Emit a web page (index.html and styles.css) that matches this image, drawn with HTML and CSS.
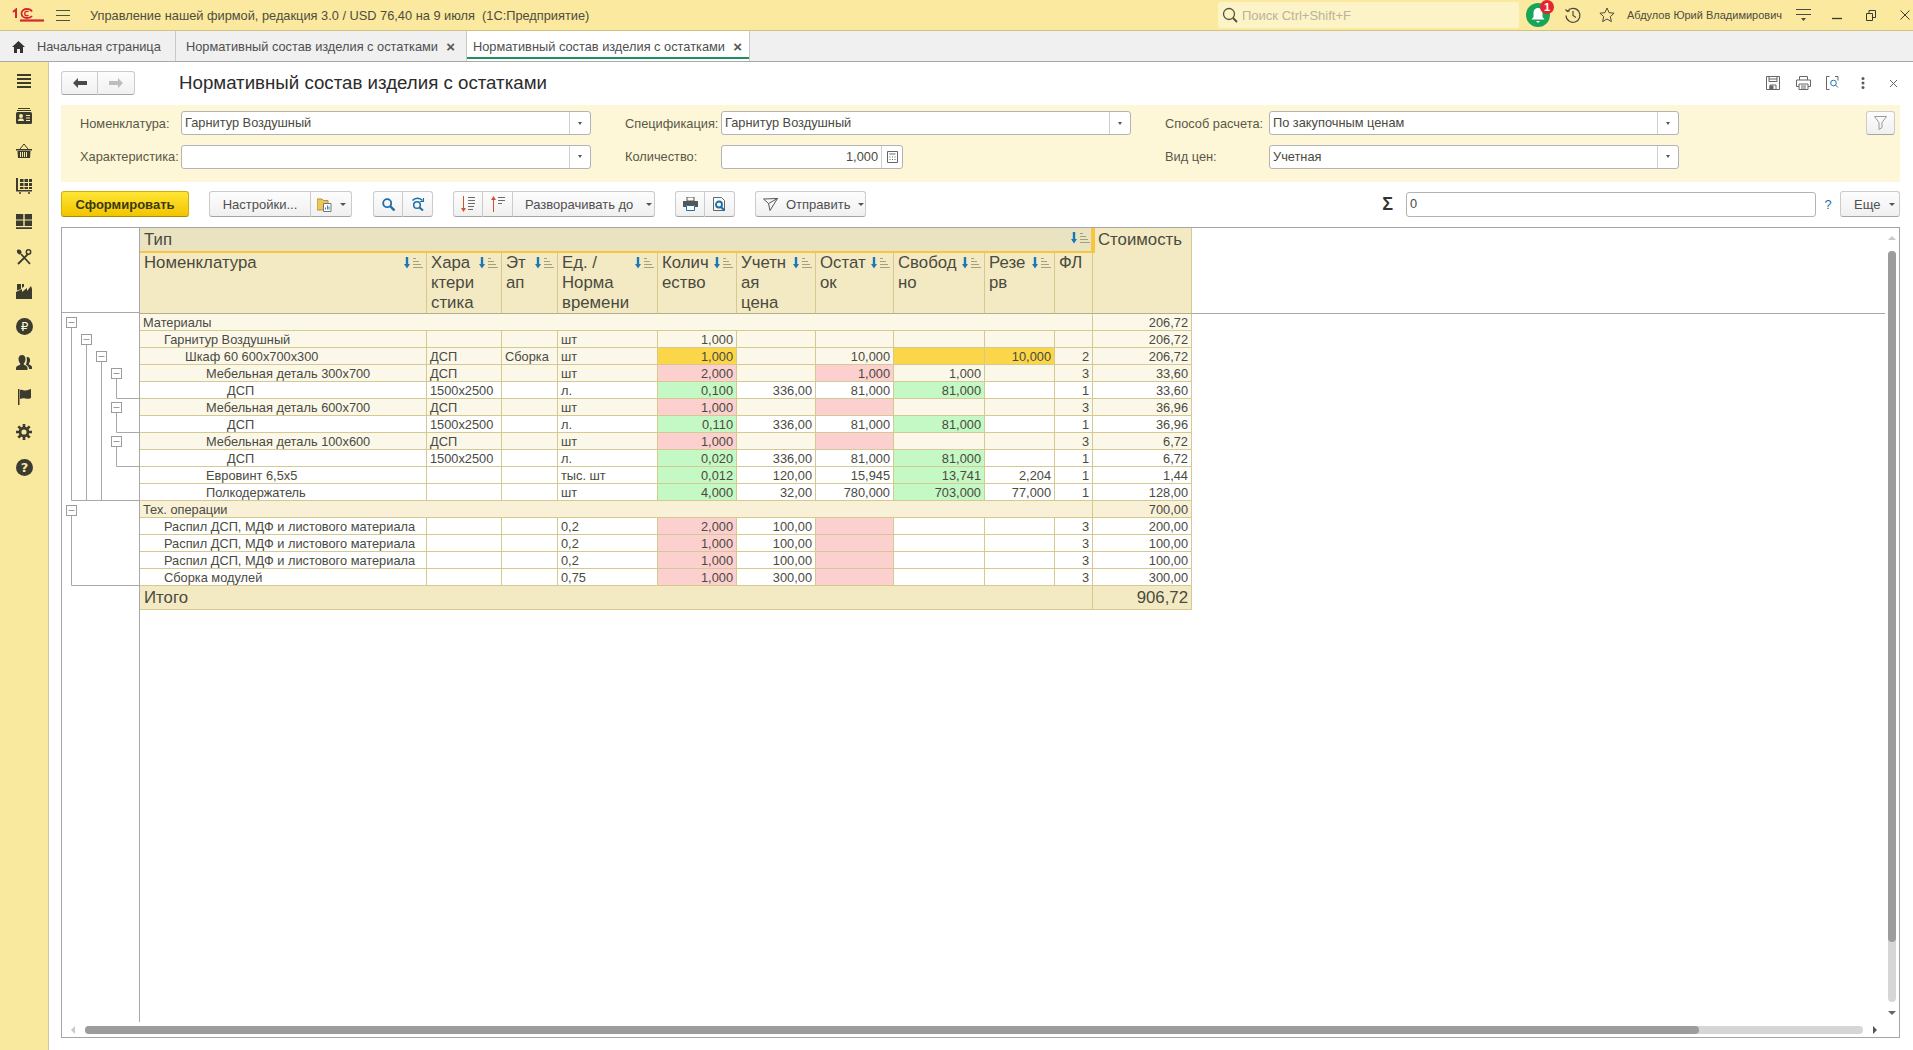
FILE: index.html
```html
<!DOCTYPE html>
<html lang="ru">
<head>
	<meta charset="utf-8">
	<title>Нормативный состав изделия с остатками</title>
	<link rel="stylesheet" href="styles.css">
</head>
<body>
	<header class="topbar">
		<svg class="logo" width="32" height="14" viewBox="0 0 32 14" fill="none" stroke="#d8262c">
			<path d="M1 4l3-2.500v8.500" stroke-width="2"/>
			<path d="M20 3.500c-1-1.800-3-2.500-5-2.500-3 0-5.500 1.800-5.500 4.500S12 10 15 10c2 0 4-.6 5-2" stroke-width="1.800"/>
			<path d="M16.500 3.800c-.5-.4-1-.5-1.600-.5-1.200 0-2.200 .9-2.200 2.200s1 2.200 2.200 2.200c.6 0 1.100-.1 1.600-.5" stroke-width="1.300"/>
			<path d="M8 12.500h24" stroke-width="2.200"/>
		</svg>
		<svg class="burger" width="14" height="12" viewBox="0 0 14 12" stroke="#55513a"><path d="M0 1.500h14M0 6.500h14M0 11.500h14"/></svg>
		<span class="app-title">Управление нашей фирмой, редакция 3.0 / USD 76,40 на 9 июля&nbsp; (1С:Предприятие)</span>
		<div class="search">
			<svg width="16" height="16" viewBox="0 0 16 16" fill="none" stroke="#55513a"><circle cx="7" cy="7" r="5.500" stroke-width="1.300"/><path d="M11 11l4 4" stroke-width="2"/></svg>
			<span>Поиск Ctrl+Shift+F</span>
		</div>
		<div class="bell">
			<svg width="24" height="24" viewBox="0 0 24 24"><circle cx="12" cy="12" r="12" fill="#18a558"/><path d="M12 5c-3 0-4.500 2.500-4.500 5v4l-2 2.500h13l-2-2.500v-4c0-2.500-1.500-5-4.500-5zM10 18h4l-2 2z" fill="#fff"/></svg>
			<span class="badge">1</span>
		</div>
		<svg class="top-icon history" width="18" height="18" viewBox="0 0 18 18" fill="none" stroke="#4b4a3c" stroke-width="1.200"><path d="M3.500 5A7 7 0 1 1 2 9.500"/><path d="M1.500 3.500l2 2 2.200-.8" /><path d="M9 5v4.500l3 2"/></svg>
		<svg class="top-icon star" width="16" height="16" viewBox="0 0 16 16" fill="none" stroke="#4b4a3c"><path d="M8 1l2.100 4.700 5 .5-3.800 3.400 1.100 5L8 12l-4.400 2.600 1.100-5L.9 6.200l5-.5z"/></svg>
		<span class="user">Абдулов Юрий Владимирович</span>
		<svg class="top-icon" width="15" height="14" viewBox="0 0 15 14" stroke="#4b4a3c"><path d="M0 1.500h15M0 6.500h15"/><path d="M5 10h5l-2.500 3z" fill="#4b4a3c" stroke="none"/></svg>
		<div class="window-btns">
			<svg width="10" height="10" viewBox="0 0 10 10" stroke="#3a3a30"><path d="M0 8.500h10" stroke-width="1.300"/></svg>
			<svg width="10" height="11" viewBox="0 0 10 11" fill="none" stroke="#3a3a30"><path d="M.5 3.500h6v7h-6zM3 3.500v-3h6.500v7h-3"/></svg>
			<svg width="10" height="10" viewBox="0 0 10 10" stroke="#3a3a30"><path d="M.5 .5l9 9M9.500 .5l-9 9"/></svg>
		</div>
	</header>

	<nav class="tabs">
		<div class="tab tab-home">
			<svg width="13" height="12" viewBox="0 0 13 12" fill="#333"><path d="M6.500 0L0 6h2v6h3V8h3v4h3V6h2z"/></svg>
			<span>Начальная страница</span>
		</div>
		<div class="tab tab-doc"><span>Нормативный состав изделия с остатками</span><b class="tab-x">×</b></div>
		<div class="tab tab-doc tab-active"><span>Нормативный состав изделия с остатками</span><b class="tab-x">×</b></div>
	</nav>

	<div class="workspace">
		<aside class="sidebar">
			<div class="side-item"><svg width="16" height="16" viewBox="0 0 16 16" stroke="#3c3b30" stroke-width="2"><path d="M1 2h14M1 6h14M1 10h14M1 14h14"/></svg></div>
			<div class="side-item"><svg width="16" height="16" viewBox="0 0 16 16" fill="#3c3b30"><path d="M2 0h12v1H2zM1 2h14v1H1z"/><rect y="4" width="16" height="12" rx="1.500"/><circle cx="5" cy="8" r="2" fill="#f9e99e"/><path d="M2 13c0-2 1.500-2.500 3-2.500s3 .5 3 2.500zM10 7h4v1h-4zM10 9.500h4v1h-4zM10 12h4v1h-4z" fill="#f9e99e"/></svg></div>
			<div class="side-item"><svg width="16" height="15" viewBox="0 0 16 15" fill="#3c3b30"><path d="M0 6h16v1.500H0zM1.500 8H14.500L14 15H2z"/><path d="M4 6l4-5 4 5" fill="none" stroke="#3c3b30"/><path d="M4.500 9v5M6.500 9v5M8.500 9v5M10.500 9v5" stroke="#f9e99e"/></svg></div>
			<div class="side-item"><svg width="16" height="16" viewBox="0 0 16 16" fill="#3c3b30"><path d="M0 0h2v12h14v1.500H0z"/><path d="M4 1h3.500v3H4zM8.500 1H12v3H8.500zM13 1h3v3h-3zM4 5h3.500v3H4zM8.500 5H12v3H8.500zM13 5h3v3h-3zM4 9h3.500v2H4zM8.500 9H12v2H8.500zM13 9h3v2h-3z"/><circle cx="4" cy="15" r="1"/><circle cx="13" cy="15" r="1"/></svg></div>
			<div class="side-item"><svg width="16" height="16" viewBox="0 0 16 16" fill="#3c3b30"><path d="M0 1h7.300v5.500H0zM8.700 1H16v5.500H8.700zM0 7.500h7.300V13H0zM8.700 7.500H16V13H8.700zM0 14.300h16V16H0z"/></svg></div>
			<div class="side-item"><svg width="17" height="16" viewBox="0 0 17 16" fill="none" stroke="#3c3b30" stroke-width="1.800"><path d="M5 5l9 10M12 5L2 15"/><circle cx="12.500" cy="3" r="2.200" stroke-width="1.500"/><path d="M1 1c2-1.500 5 0 4.500 3L4 5.500C2 5.500 .5 3.500 1 1z" fill="#3c3b30" stroke="none"/></svg></div>
			<div class="side-item"><svg width="16" height="15" viewBox="0 0 16 15" fill="#3c3b30"><path d="M0 15V8l6-3v3l5-4v3l4-5 1 3v10z"/><path d="M1 0h4v5L1 6.500zM6 0h2v2.500L6 4z"/></svg></div>
			<div class="side-item"><svg width="17" height="17" viewBox="0 0 17 17"><circle cx="8.500" cy="8.500" r="8.500" fill="#3c3b30"/><text class="svg-glyph" x="8.500" y="13" text-anchor="middle" font-size="12" fill="#fdf7d8">₽</text></svg></div>
			<div class="side-item"><svg width="17" height="15" viewBox="0 0 17 15" fill="#3c3b30"><path d="M6 0c2.300 0 3.500 1.800 3.500 4S8.300 8 7.800 8.500v1.300c2 .6 3.700 1.500 3.700 3.200V15H0v-2c0-1.700 2.200-2.600 4.200-3.200V8.500C3.700 8 2.500 6.200 2.500 4S3.700 0 6 0z"/><path d="M11.500 2c1.700 0 2.600 1.400 2.600 3.200 0 1.500-.8 2.700-1.200 3.200v1c1.500.5 3.100 1.100 3.100 2.600V14H13c0-2-1-3.300-3.200-4.200.8-1.200 1.300-3.200.9-7.600z"/></svg></div>
			<div class="side-item"><svg width="13" height="16" viewBox="0 0 13 16" fill="#3c3b30"><path d="M0 0h1.500v16H0z"/><path d="M2 1c2.500-1 4 1 6 .5S11.500 .5 13 0v9c-2 1-3.500 1-5 .7S4 9 2 10z"/></svg></div>
			<div class="side-item"><svg width="16" height="16" viewBox="0 0 16 16" fill="none" stroke="#3c3b30"><circle cx="8" cy="8" r="4" stroke-width="2.800"/><path d="M8 0v3M8 13v3M0 8h3M13 8h3M2.300 2.300l2.200 2.200M11.500 11.500l2.200 2.200M13.700 2.300l-2.200 2.200M4.500 11.500l-2.200 2.200" stroke-width="2.600"/></svg></div>
			<div class="side-item"><svg width="17" height="17" viewBox="0 0 17 17"><circle cx="8.500" cy="8.500" r="8.500" fill="#3c3b30"/><text class="svg-glyph" x="8.500" y="13" text-anchor="middle" font-size="13" font-weight="bold" fill="#f9e99e">?</text></svg></div>
		</aside>

		<main class="content">
			<div class="title-row">
				<div class="btn-group nav-group">
					<button class="btn nav-btn"><svg width="14" height="10" viewBox="0 0 14 10" fill="#4a4a4a"><path d="M0 5l5-5v3h9v4H5v3z"/></svg></button>
					<button class="btn nav-btn"><svg width="14" height="10" viewBox="0 0 14 10" fill="#bdbdbd"><path d="M14 5L9 0v3H0v4h9v3z"/></svg></button>
				</div>
				<h1 class="form-title">Нормативный состав изделия с остатками</h1>
				<div class="form-actions">
					<svg width="14" height="14" viewBox="0 0 14 14" fill="none" stroke="#666"><path d="M.5 .5h13v13H.5zM3 .5v5h8v-5M3 3h8M4 13.500V9h6v4.500"/><path d="M4 10h3v3.500H4z" fill="#666"/></svg>
					<svg class="act-print" width="15" height="14" viewBox="0 0 15 14" fill="none" stroke="#666"><path d="M3.500 4V.5h8V4M3 10.500H.5V4h14v6.500H12M3 8h9v5.500H3zM5 10h5M5 12h5"/></svg>
					<svg class="act-preview" width="15" height="14" viewBox="0 0 15 14" fill="none" stroke="#666"><path d="M3.500 13.500h-3V.5h3M9 .5h3v4"/><circle cx="7.500" cy="7" r="2.800" stroke="#1f77b4"/><path d="M9.500 9l2.500 2.500" stroke="#1f77b4"/></svg>
					<svg class="act-dots" width="4" height="12" viewBox="0 0 4 12" fill="#5a5a5a"><circle cx="2" cy="1.500" r="1.500"/><circle cx="2" cy="6" r="1.500"/><circle cx="2" cy="10.500" r="1.500"/></svg>
					<svg class="act-close" width="7" height="7" viewBox="0 0 7 7" stroke="#666"><path d="M0 0l7 7M7 0L0 7"/></svg>
				</div>
			</div>

			<section class="filters">
				<label class="f-label">Номенклатура:</label>
				<div class="field"><span class="field-val">Гарнитур Воздушный</span><i class="drop"></i></div>
				<label class="f-label f-next">Спецификация:</label>
				<div class="field"><span class="field-val">Гарнитур Воздушный</span><i class="drop"></i></div>
				<label class="f-label f-next">Способ расчета:</label>
				<div class="field"><span class="field-val">По закупочным ценам</span><i class="drop"></i></div>
				<button class="btn filter-btn"><svg width="13" height="14" viewBox="0 0 13 14" fill="none" stroke="#9a9a9a"><path d="M.5 .5h12l-4.500 6v5l-3 2v-7z"/></svg></button>

				<label class="f-label">Характеристика:</label>
				<div class="field"><span class="field-val"></span><i class="drop"></i></div>
				<label class="f-label f-next">Количество:</label>
				<div class="field field-qty"><span class="field-val num">1,000</span><i class="calc"><svg width="11" height="12" viewBox="0 0 11 12" fill="none" stroke="#666"><path d="M.5 .5h10v11H.5zM2.500 3h6"/><path d="M2.500 6h1M5 6h1M7.500 6h1M2.500 8.500h1M5 8.500h1M7.500 8.500h1"/></svg></i></div>
				<label class="f-label f-next">Вид цен:</label>
				<div class="field"><span class="field-val">Учетная</span><i class="drop"></i></div>
			</section>

			<section class="toolbar">
				<button class="btn btn-main">Сформировать</button>
				<div class="btn-group group-settings">
					<button class="btn w-settings">Настройки...</button>
					<button class="btn w-variant"><svg width="17" height="15" viewBox="0 0 17 15"><path d="M0 2h5l1.500 1.500H11V13H0z" fill="#efc65a" stroke="#b8913a"/><path d="M6.500 6.500h7.500v8H6.500z" fill="#fff" stroke="#777"/><path d="M8.500 12.500v-2M10.500 12.500v-4M12 12.500v-3" stroke="#2f86c0"/></svg><i class="caret"></i></button>
				</div>
				<div class="btn-group group-search">
					<button class="btn w-30"><svg width="13" height="13" viewBox="0 0 13 13" fill="none" stroke="#1c6ea8" stroke-width="1.800"><circle cx="5.200" cy="5.200" r="4"/><path d="M8 8l4.500 4.500" stroke-width="2.400"/></svg></button>
					<button class="btn w-30"><svg width="14" height="14" viewBox="0 0 14 14" fill="none" stroke="#1c6ea8" stroke-width="1.500"><circle cx="6" cy="8" r="3.300"/><path d="M8.500 10.500l3.500 3" stroke-width="2"/><path d="M1.500 3.500C4 .5 9 .5 11.500 3.500"/><path d="M12.500 1v3.500H9" stroke-width="1.100"/></svg></button>
				</div>
				<div class="btn-group group-expand">
					<button class="btn w-30"><svg width="14" height="16" viewBox="0 0 14 16" fill="none"><path d="M2.500 0v14" stroke="#d0522c"/><path d="M0 12l2.500 4L5 12z" fill="#d0522c"/><path d="M7 1.500h7M7 4.500h7M7 7.500h7M7 10.500h6M7 13.500h5" stroke="#6b6b6b"/></svg></button>
					<button class="btn w-30"><svg width="14" height="16" viewBox="0 0 14 16" fill="none"><path d="M2.500 2v14" stroke="#d0522c"/><path d="M0 4l2.500-4L5 4z" fill="#d0522c"/><path d="M7 1.500h7M7 4.500h7M7 7.500h4" stroke="#6b6b6b"/></svg></button>
					<button class="btn w-expand">Разворачивать до<i class="caret caret-wide"></i></button>
				</div>
				<div class="btn-group group-print">
					<button class="btn w-30"><svg width="15" height="14" viewBox="0 0 15 14"><path d="M4 0h7v4H4z" fill="none" stroke="#555"/><path d="M0 4h15v6h-3V8H3v2H0z" fill="#555"/><path d="M3.500 8.500h8v5h-8z" fill="#fff" stroke="#1c6ea8"/></svg></button>
					<button class="btn w-30"><svg width="13" height="15" viewBox="0 0 13 15" fill="none"><path d="M.5 .5h8l3 3v10H.5z" stroke="#666"/><circle cx="6" cy="7.500" r="3" stroke="#1c6ea8" stroke-width="1.800"/><path d="M8 10l3.500 3.500" stroke="#1c6ea8" stroke-width="2"/></svg></button>
				</div>
				<button class="btn btn-send"><svg width="15" height="13" viewBox="0 0 15 13" fill="none" stroke="#555"><path d="M.5 1L14.500 .5 7 12.500 5.500 5.500zM5.500 5.500L14.500 .5"/></svg><span>Отправить</span><i class="caret"></i></button>
				<span class="sigma">Σ</span>
				<div class="field sum-field"><span class="field-val">0</span></div>
				<span class="hint">?</span>
				<button class="btn btn-more">Еще<i class="caret caret-more"></i></button>
			</section>

			<section class="sheet">
				<div class="sheet-main">
					<div class="gutter">
						<svg width="77" height="794" viewBox="62 228 77 794" fill="none" stroke="#a8a8a8">
							<path d="M62 312.500h77"/>
							<path d="M71.500 328V500.500H139M86.500 345V500M101.500 362V500"/>
							<path d="M116.500 379V398.500H139M116.500 413V432.500H139M116.500 447V466.500H139"/>
							<path d="M71.500 516V585.500H139"/>
							<g class="tree-box" fill="#fff" stroke="#9c9c9c">
								<rect x="66.500" y="317.500" width="10" height="10"/><path d="M68.500 322.500h6"/>
								<rect x="81.500" y="334.500" width="10" height="10"/><path d="M83.500 339.500h6"/>
								<rect x="96.500" y="351.500" width="10" height="10"/><path d="M98.500 356.500h6"/>
								<rect x="111.500" y="368.500" width="10" height="10"/><path d="M113.500 373.500h6"/>
								<rect x="111.500" y="402.500" width="10" height="10"/><path d="M113.500 407.500h6"/>
								<rect x="111.500" y="436.500" width="10" height="10"/><path d="M113.500 441.500h6"/>
								<rect x="66.500" y="505.500" width="10" height="10"/><path d="M68.500 510.500h6"/>
							</g>
						</svg>
					</div>
					<table class="report">
						<colgroup>
							<col class="c-nom"><col class="c-har"><col class="c-etap"><col class="c-ed"><col class="c-kol"><col class="c-uch"><col class="c-ost"><col class="c-svob"><col class="c-rez"><col class="c-fl"><col class="c-cost"><col>
						</colgroup>
						<thead>
							<tr class="head-type">
								<th colspan="10" class="type-cell"><svg class="sort" width="20" height="12" viewBox="0 0 20 12"><use href="#sort-icon"/></svg>Тип</th>
								<th rowspan="2" class="cost-head">Стоимость</th>
								<th rowspan="2" class="filler"></th>
							</tr>
							<tr class="head-cols">
								<th><svg class="sort" width="20" height="12" viewBox="0 0 20 12"><use href="#sort-icon"/></svg>Номенклатура</th>
								<th><svg class="sort" width="20" height="12" viewBox="0 0 20 12"><use href="#sort-icon"/></svg>Хара<br>ктери<br>стика</th>
								<th><svg class="sort" width="20" height="12" viewBox="0 0 20 12"><use href="#sort-icon"/></svg>Эт<br>ап</th>
								<th><svg class="sort" width="20" height="12" viewBox="0 0 20 12"><use href="#sort-icon"/></svg>Ед. /<br>Норма<br>времени</th>
								<th><svg class="sort" width="20" height="12" viewBox="0 0 20 12"><use href="#sort-icon"/></svg>Колич<br>ество</th>
								<th><svg class="sort" width="20" height="12" viewBox="0 0 20 12"><use href="#sort-icon"/></svg>Учетн<br>ая<br>цена</th>
								<th><svg class="sort" width="20" height="12" viewBox="0 0 20 12"><use href="#sort-icon"/></svg>Остат<br>ок</th>
								<th><svg class="sort" width="20" height="12" viewBox="0 0 20 12"><use href="#sort-icon"/></svg>Свобод<br>но</th>
								<th><svg class="sort" width="20" height="12" viewBox="0 0 20 12"><use href="#sort-icon"/></svg>Резе<br>рв</th>
								<th>ФЛ</th>
							</tr>
						</thead>
						<tbody>
							<tr class="row-group"><td colspan="10">Материалы</td><td class="num">206,72</td></tr>
							<tr class="row-alt"><td class="lv1">Гарнитур Воздушный</td><td></td><td></td><td>шт</td><td class="num">1,000</td><td></td><td></td><td></td><td></td><td></td><td class="num">206,72</td></tr>
							<tr class="row-alt"><td class="lv2">Шкаф 60 600x700x300</td><td>ДСП</td><td>Сборка</td><td>шт</td><td class="num cell-y">1,000</td><td></td><td class="num">10,000</td><td class="cell-y"></td><td class="num cell-y">10,000</td><td class="num">2</td><td class="num">206,72</td></tr>
							<tr class="row-alt"><td class="lv3">Мебельная деталь 300x700</td><td>ДСП</td><td></td><td>шт</td><td class="num cell-r">2,000</td><td></td><td class="num cell-r">1,000</td><td class="num">1,000</td><td></td><td class="num">3</td><td class="num">33,60</td></tr>
							<tr><td class="lv4">ДСП</td><td>1500x2500</td><td></td><td>л.</td><td class="num cell-g">0,100</td><td class="num">336,00</td><td class="num">81,000</td><td class="num cell-g">81,000</td><td></td><td class="num">1</td><td class="num">33,60</td></tr>
							<tr class="row-alt"><td class="lv3">Мебельная деталь 600x700</td><td>ДСП</td><td></td><td>шт</td><td class="num cell-r">1,000</td><td></td><td class="cell-r"></td><td></td><td></td><td class="num">3</td><td class="num">36,96</td></tr>
							<tr><td class="lv4">ДСП</td><td>1500x2500</td><td></td><td>л.</td><td class="num cell-g">0,110</td><td class="num">336,00</td><td class="num">81,000</td><td class="num cell-g">81,000</td><td></td><td class="num">1</td><td class="num">36,96</td></tr>
							<tr class="row-alt"><td class="lv3">Мебельная деталь 100x600</td><td>ДСП</td><td></td><td>шт</td><td class="num cell-r">1,000</td><td></td><td class="cell-r"></td><td></td><td></td><td class="num">3</td><td class="num">6,72</td></tr>
							<tr><td class="lv4">ДСП</td><td>1500x2500</td><td></td><td>л.</td><td class="num cell-g">0,020</td><td class="num">336,00</td><td class="num">81,000</td><td class="num cell-g">81,000</td><td></td><td class="num">1</td><td class="num">6,72</td></tr>
							<tr><td class="lv3">Евровинт 6,5x5</td><td></td><td></td><td>тыс. шт</td><td class="num cell-g">0,012</td><td class="num">120,00</td><td class="num">15,945</td><td class="num cell-g">13,741</td><td class="num">2,204</td><td class="num">1</td><td class="num">1,44</td></tr>
							<tr><td class="lv3">Полкодержатель</td><td></td><td></td><td>шт</td><td class="num cell-g">4,000</td><td class="num">32,00</td><td class="num">780,000</td><td class="num cell-g">703,000</td><td class="num">77,000</td><td class="num">1</td><td class="num">128,00</td></tr>
							<tr class="row-group2"><td colspan="10">Тех. операции</td><td class="num">700,00</td></tr>
							<tr><td class="lv1">Распил ДСП, МДФ и листового материала</td><td></td><td></td><td>0,2</td><td class="num cell-r">2,000</td><td class="num">100,00</td><td class="cell-r"></td><td></td><td></td><td class="num">3</td><td class="num">200,00</td></tr>
							<tr><td class="lv1">Распил ДСП, МДФ и листового материала</td><td></td><td></td><td>0,2</td><td class="num cell-r">1,000</td><td class="num">100,00</td><td class="cell-r"></td><td></td><td></td><td class="num">3</td><td class="num">100,00</td></tr>
							<tr><td class="lv1">Распил ДСП, МДФ и листового материала</td><td></td><td></td><td>0,2</td><td class="num cell-r">1,000</td><td class="num">100,00</td><td class="cell-r"></td><td></td><td></td><td class="num">3</td><td class="num">100,00</td></tr>
							<tr><td class="lv1">Сборка модулей</td><td></td><td></td><td>0,75</td><td class="num cell-r">1,000</td><td class="num">300,00</td><td class="cell-r"></td><td></td><td></td><td class="num">3</td><td class="num">300,00</td></tr>
							<tr class="row-total"><td colspan="10">Итого</td><td class="num">906,72</td></tr>
						</tbody>
					</table>
				</div>
				<div class="vscroll"><i class="arrow-up"></i><div class="v-track"><div class="v-thumb"></div></div><i class="arrow-down"></i></div>
				<div class="hscroll"><i class="arrow-left"></i><div class="h-track"><div class="h-thumb"></div></div><i class="arrow-right"></i></div>
				<div class="corner"></div>
			</section>
		</main>
	</div>

	<svg width="0" height="0" class="defs">
		<symbol id="sort-icon" viewBox="0 0 20 12">
			<path d="M3 0v8" stroke="#1a78b8" stroke-width="2.400" fill="none"/>
			<path d="M0 7h6l-3 4.500z" fill="#1a78b8"/>
			<path d="M9 1.500h3M9 4.500h6M9 7.500h8M9 10.500h10" stroke="#a3a07c" fill="none"/>
		</symbol>
	</svg>
</body>
</html>
```

FILE: styles.css
```css
* {
	margin: 0;
	padding: 0;
	box-sizing: border-box;
}

html, body {
	height: 100%;
	overflow: hidden;
}

body {
	display: flex;
	flex-direction: column;
	background: #fff;
	color: #4a4a40;
	font-family: "Liberation Sans", Arial, sans-serif;
	font-size: 12.8px;
}

.defs {
	position: absolute;
}

/* top bar */
.topbar {
	display: flex;
	align-items: center;
	height: 31px;
	flex: none;
	background: #fae99f;
	border-bottom: 1px solid #cfc282;
}

.logo {
	margin-left: 12px;
}

.burger {
	margin-left: 12px;
}

.app-title {
	margin-left: 20px;
	width: 1128px;
	color: #4f4d3c;
}

.search {
	display: flex;
	align-items: center;
	gap: 4px;
	width: 301px;
	height: 26px;
	padding-left: 4px;
	background: #fcf3c6;
	border-radius: 2px;
	color: #b9b49b;
	font-size: 13px;
}

.bell {
	position: relative;
	display: flex;
	margin-left: 7px;
}

.badge {
	position: absolute;
	top: -3px;
	right: -4px;
	width: 14px;
	height: 14px;
	border-radius: 50%;
	background: #e3262e;
	color: #fff;
	font-size: 11px;
	font-weight: bold;
	line-height: 14px;
	text-align: center;
}

.history {
	margin-left: 14px;
}

.star {
	margin-left: 17px;
}

.user {
	margin-left: 12px;
	width: 169px;
	color: #4f4d3c;
	font-size: 11px;
	white-space: nowrap;
}

.window-btns {
	display: flex;
	align-items: center;
	gap: 24px;
	margin-left: 21px;
}

/* tabs */
.tabs {
	display: flex;
	height: 31px;
	flex: none;
	background: #f0f0f0;
	border-bottom: 1px solid #a9a9a9;
}

.tab {
	display: flex;
	align-items: center;
	padding-top: 1px;
	color: #4f4f4f;
	white-space: nowrap;
}

.tab-home {
	width: 176px;
	gap: 12px;
	padding-left: 12px;
	border-right: 1px solid #c9c9c9;
}

.tab-doc {
	width: 288px;
	padding-left: 10px;
	justify-content: space-between;
	padding-right: 9px;
}

.tab-x {
	color: #555;
	font-size: 15px;
	line-height: 12px;
}

.tab-active {
	width: 284px;
	margin-left: 2px;
	padding-left: 6px;
	padding-right: 7px;
	background: linear-gradient(#1f8f5f, #1f8f5f) 0 26px / 100% 2px no-repeat, #fff;
	border-left: 1px solid #c9c9c9;
	border-right: 1px solid #c9c9c9;
}

/* workspace */
.workspace {
	display: flex;
	flex: 1;
	min-height: 0;
}

.sidebar {
	width: 49px;
	flex: none;
	padding-top: 1px;
	background: #f9e99e;
	border-right: 1px solid #cfc6a0;
}

.side-item {
	display: flex;
	align-items: center;
	justify-content: center;
	height: 35.2px;
}

.svg-glyph {
	font-family: "DejaVu Sans", sans-serif;
}

.content {
	flex: 1;
	min-width: 0;
	padding: 9px 13px 0 12px;
}

.title-row {
	display: flex;
	align-items: center;
	height: 24px;
}

.form-title {
	margin-left: 44px;
	color: #2b2b2b;
	font-size: 18.7px;
	font-weight: normal;
}

.form-actions {
	display: flex;
	align-items: center;
	margin-left: auto;
	margin-right: 3px;
}

.act-print {
	margin-left: 16px;
}

.act-preview {
	margin-left: 15px;
}

.act-dots {
	margin-left: 20px;
}

.act-close {
	margin-left: 25px;
}

/* buttons */
.btn {
	display: inline-flex;
	align-items: center;
	justify-content: center;
	height: 100%;
	background: linear-gradient(#fdfdfd, #f0f0f0);
	border: 1px solid #cbcbcb;
	border-bottom-color: #a5a5a5;
	border-radius: 3px;
	color: #4f4f4f;
	font-family: inherit;
	font-size: 13px;
}

.btn-group {
	display: flex;
	height: 100%;
}

.btn-group .btn {
	border-radius: 0;
	border-left: none;
}

.btn-group .btn:first-child {
	border-left: 1px solid #cbcbcb;
	border-radius: 3px 0 0 3px;
}

.btn-group .btn:last-child {
	border-radius: 0 3px 3px 0;
}

.nav-btn {
	width: 37px;
}

.caret {
	display: inline-block;
	margin-left: 6px;
	border-left: 3px solid transparent;
	border-right: 3px solid transparent;
	border-top: 3px solid #555;
}

.caret-wide {
	margin-left: 13px;
}

.caret-more {
	margin-left: 9px;
}

/* filter panel */
.filters {
	display: grid;
	grid-template-columns: 101px 410px 130px 410px 138px 410px 1fr;
	grid-template-rows: 24px 25px;
	row-gap: 9px;
	align-items: center;
	height: 77px;
	margin-top: 10px;
	padding: 6px 5px 0 19px;
	background: #fdf7d8;
}

.f-label {
	color: #5a5848;
	white-space: nowrap;
}

.f-next {
	padding-left: 34px;
}

.field {
	display: flex;
	height: 24px;
	background: #fff;
	border: 1px solid #b3b3b3;
	border-radius: 3px;
	color: #4a4a40;
}

.field-val {
	flex: 1;
	min-width: 0;
	padding: 0 3px;
	line-height: 22px;
}

.drop {
	display: flex;
	align-items: center;
	justify-content: center;
	width: 21px;
	border-left: 1px solid #cfcfcf;
}

.drop::after {
	content: "";
	border-left: 2.500px solid transparent;
	border-right: 2.500px solid transparent;
	border-top: 3px solid #555;
}

.field-qty {
	width: 182px;
}

.calc {
	display: flex;
	align-items: center;
	justify-content: center;
	width: 21px;
	border-left: 1px solid #cfcfcf;
}

.num {
	text-align: right;
}

.filter-btn {
	width: 29px;
	height: 24px;
	justify-self: end;
}

/* toolbar */
.toolbar {
	display: flex;
	align-items: center;
	height: 26px;
	margin-top: 9px;
}

.btn-main {
	width: 128px;
	background: linear-gradient(#ffe635, #f3c400);
	border-color: #cfae10;
	border-bottom-color: #a98d00;
	color: #3c3a10;
	font-size: 13px;
	font-weight: bold;
}

.group-settings {
	margin-left: 20px;
}

.w-settings {
	width: 102px;
}

.w-variant {
	width: 41px;
}

.group-search {
	margin-left: 21px;
}

.group-expand {
	margin-left: 20px;
}

.group-print {
	margin-left: 20px;
}

.w-30 {
	width: 30px;
}

.w-expand {
	width: 142px;
	justify-content: flex-start;
	padding-left: 12px;
}

.btn-send {
	width: 111px;
	gap: 8px;
	margin-left: 20px;
	justify-content: flex-start;
	padding-left: 7px;
}

.btn-send .caret {
	margin-left: 0;
}

.sigma {
	margin-left: auto;
	margin-right: 13px;
	color: #333;
	font-size: 18px;
	font-weight: bold;
}

.sum-field {
	width: 410px;
	height: 25px;
}

.hint {
	width: 24px;
	color: #1c6ea8;
	text-align: center;
}

.btn-more {
	width: 60px;
	justify-content: flex-start;
	padding-left: 13px;
}

/* report */
.sheet {
	display: grid;
	grid-template-columns: 1fr 14px;
	grid-template-rows: 794px 15px;
	height: 811px;
	margin-top: 10px;
	border: 1px solid #a5a5a5;
}

.sheet-main {
	display: flex;
	min-width: 0;
}

.gutter {
	width: 78px;
	flex: none;
	border-right: 1px solid #a8a8a8;
}

.gutter svg {
	display: block;
}

.report {
	flex: 1;
	align-self: flex-start;
	table-layout: fixed;
	border-collapse: separate;
	border-spacing: 0;
	color: #4a4a40;
	font-size: 12.8px;
}

.c-nom { width: 287px; }
.c-har { width: 75px; }
.c-etap { width: 56px; }
.c-ed { width: 100px; }
.c-kol { width: 79px; }
.c-uch { width: 79px; }
.c-ost { width: 78px; }
.c-svob { width: 91px; }
.c-rez { width: 70px; }
.c-fl { width: 38px; }
.c-cost { width: 99px; }

.report th {
	padding: 0 2px 0 4px;
	border-right: 1px solid #d5c98f;
	border-bottom: 1px solid #d5c98f;
	background: #f3eac3;
	color: #4a4a40;
	font-size: 16.8px;
	font-weight: normal;
	line-height: 20px;
	text-align: left;
	vertical-align: top;
	overflow: hidden;
}

.head-type {
	height: 25px;
}

.report .type-cell {
	position: relative;
	overflow: visible;
	padding-right: 0;
	background: #e9e3c1;
	border-right: 2px solid #f6c63e;
	border-bottom: 2px solid #f6c63e;
	box-shadow: 2px 0 0 #f6c63e;
	line-height: 23px;
}

.head-cols {
	height: 60px;
}

.report .head-cols th {
	border-bottom-color: #b5ae8c;
}

.report .cost-head {
	padding-left: 5px;
	border-bottom-color: #b5ae8c;
	line-height: 23px;
}

.report .filler {
	background: none;
	border-right: none;
	border-bottom-color: #a8a8a8;
}

.sort {
	float: right;
	margin-top: 4px;
}

.report td {
	height: 17px;
	padding: 2px 3px 0;
	border-right: 1px solid #d5c98f;
	border-bottom: 1px solid #d5c98f;
	line-height: 14px;
	white-space: nowrap;
	overflow: hidden;
}

.row-alt td {
	background: #fbf8ea;
}

.row-group td {
	background: #fcf8e8;
}

.row-group2 td {
	background: #f8f1d8;
}

.report .row-total td {
	height: 24px;
	padding: 1px 3px 0 4px;
	background: #f3eac3;
	font-size: 16.8px;
	line-height: 20px;
}

.report .cell-y {
	background: #fad648;
}

.report .cell-r {
	background: #fdd0d0;
}

.report .cell-g {
	background: #c4f8c4;
}

.lv1 { padding-left: 24px !important; }
.lv2 { padding-left: 45px !important; }
.lv3 { padding-left: 66px !important; }
.lv4 { padding-left: 87px !important; }

/* scrollbars */
.vscroll {
	display: flex;
	flex-direction: column;
	align-items: center;
	padding: 8px 0 7px;
}

.v-track {
	flex: 1;
	width: 8px;
	margin: 11px 0 9px;
	background: #d6d6d6;
	border-radius: 4px;
}

.v-thumb {
	height: 92%;
	background: #9c9c9c;
	border-radius: 4px;
}

.hscroll {
	display: flex;
	align-items: center;
	padding: 0 8px 0 9px;
}

.h-track {
	flex: 1;
	height: 8px;
	margin: 0 10px;
	background: #d6d6d6;
	border-radius: 4px;
}

.h-thumb {
	width: 90.8%;
	height: 100%;
	background: #9c9c9c;
	border-radius: 4px;
}

.arrow-up {
	border-left: 4px solid transparent;
	border-right: 4px solid transparent;
	border-bottom: 4px solid #c9c9c9;
}

.arrow-down {
	border-left: 4px solid transparent;
	border-right: 4px solid transparent;
	border-top: 4px solid #666;
}

.arrow-left {
	border-top: 4px solid transparent;
	border-bottom: 4px solid transparent;
	border-right: 4px solid #c9c9c9;
}

.arrow-right {
	border-top: 4px solid transparent;
	border-bottom: 4px solid transparent;
	border-left: 4px solid #555;
}
```
